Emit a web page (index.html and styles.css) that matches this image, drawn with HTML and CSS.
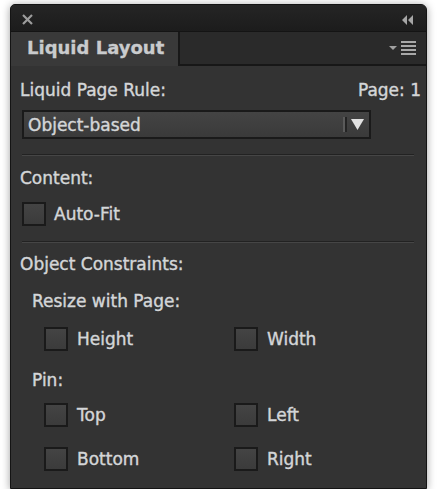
FILE: index.html
```html
<!DOCTYPE html>
<html>
<head>
<meta charset="utf-8">
<link rel="stylesheet" href="styles.css">
</head>
<body>
<div class="window">
  <div class="titlebar">
    <svg class="close" width="11" height="11" viewBox="0 0 11 11"><path d="M1 1L10 10M10 1L1 10" stroke="#9c9c9c" stroke-width="2.2" fill="none"/></svg>
    <svg class="collapse" width="11" height="10" viewBox="0 0 11 10"><path d="M0 5L5 0V10Z M6 5L11 0V10Z" fill="#a6a6a6"/></svg>
  </div>
  <div class="tabrow">
    <div class="tab">Liquid Layout</div>
    <div class="tabfill">
      <svg class="menu" width="28" height="16" viewBox="0 0 28 16">
        <path d="M0 5H8L4 9Z" fill="#a0a0a0"/>
        <rect x="12" y="0" width="15" height="2" fill="#a8a8a8"/>
        <rect x="12" y="4" width="15" height="2" fill="#a8a8a8"/>
        <rect x="12" y="8" width="15" height="2" fill="#a8a8a8"/>
        <rect x="12" y="12" width="15" height="2" fill="#a8a8a8"/>
      </svg>
    </div>
  </div>
  <div class="content">
    <div class="head">
      <span>Liquid Page Rule:</span>
      <span>Page: 1</span>
    </div>
    <div class="select">
      <span class="select-text">Object-based</span>
      <span class="select-sep"></span>
      <svg class="select-arrow" width="13" height="11" viewBox="0 0 13 11"><path d="M0 0H13L6.5 11Z" fill="#e2e2e2"/></svg>
    </div>
    <div class="rule rule-1"></div>
    <div class="label label-content">Content:</div>
    <div class="check check-autofit"><span class="box"></span><span>Auto-Fit</span></div>
    <div class="rule rule-2"></div>
    <div class="label label-constraints">Object Constraints:</div>
    <div class="label sub label-resize">Resize with Page:</div>
    <div class="grid grid-resize">
      <div class="check"><span class="box"></span><span>Height</span></div>
      <div class="check"><span class="box"></span><span>Width</span></div>
    </div>
    <div class="label sub label-pin">Pin:</div>
    <div class="grid grid-pin">
      <div class="check"><span class="box"></span><span>Top</span></div>
      <div class="check"><span class="box"></span><span>Left</span></div>
      <div class="check"><span class="box"></span><span>Bottom</span></div>
      <div class="check"><span class="box"></span><span>Right</span></div>
    </div>
  </div>
</div>
</body>
</html>
```

FILE: styles.css
```css
html, body {
  margin: 0;
  padding: 0;
  background: #ffffff;
}
body {
  font-family: "DejaVu Sans", "Lucida Grande", sans-serif;
  font-size: 17px;
  line-height: 20px;
  color: #d4d6d8;
  -webkit-text-stroke: 0.4px #d4d6d8;
}
.window {
  box-sizing: border-box;
  margin: 4px 0 0 10px;
  width: 417px;
  height: 485px;
  border: 1px solid #141414;
  border-radius: 5px 6px 0 0;
  background: #333333;
  display: flex;
  flex-direction: column;
  box-shadow: 0 1px 9px rgba(0, 0, 0, 0.38);
  overflow: hidden;
}
.titlebar {
  height: 27px;
  flex: none;
  display: flex;
  justify-content: space-between;
  align-items: flex-start;
  padding: 9px 13px 0 11px;
  box-sizing: border-box;
  background: linear-gradient(#252525, #1c1c1c);
  border-bottom: 1px solid #141414;
}
.close, .collapse {
  display: block;
}
.collapse {
  margin-top: 1px;
}
.tabrow {
  height: 34px;
  flex: none;
  display: flex;
}
.tab {
  box-sizing: border-box;
  width: 169px;
  height: 34px;
  padding: 5px 0 0 16px;
  background: #393939;
  border-right: 2px solid #181818;
  font-weight: bold;
  font-size: 18px;
  line-height: 22px;
  color: #c9cbcd;
  -webkit-text-stroke: 0.3px #c9cbcd;
}
.tabfill {
  flex: 1;
  box-sizing: border-box;
  height: 34px;
  background: #2a2a2a;
  border-bottom: 2px solid #171717;
  display: flex;
  justify-content: flex-end;
  align-items: center;
  padding-right: 9px;
}
.menu {
  display: block;
  margin-top: 1px;
}
.content {
  flex: 1;
  padding: 14px 5px 0 9px;
}
.head {
  display: flex;
  justify-content: space-between;
}
.select {
  box-sizing: border-box;
  margin: 10px 0 0 2px;
  width: 349px;
  height: 29px;
  border: 2px solid #1a1a1a;
  background: linear-gradient(#444444, #3a3a3a);
  display: flex;
  align-items: center;
  padding-left: 4px;
}
.select-text {
  flex: 1;
}
.select-sep {
  box-sizing: border-box;
  width: 4px;
  height: 15px;
  border-left: 2px solid #5a5a5a;
  border-right: 2px solid #242424;
  margin-right: 4px;
}
.select-arrow {
  display: block;
  margin-right: 5px;
}
.rule {
  margin: 0 7px 0 2px;
  border-top: 1px solid #222222;
  border-bottom: 1px solid #464646;
}
.rule-1 { margin-top: 15px; }
.rule-2 { margin-top: 15px; }
.label-content { margin-top: 12px; }
.label-constraints { margin-top: 11px; }
.label-resize { margin-top: 17px; }
.label-pin { margin-top: 19px; }
.sub { padding-left: 12px; }
.check {
  display: flex;
  align-items: center;
  height: 24px;
}
.check-autofit {
  margin: 14px 0 0 2px;
}
.box {
  box-sizing: border-box;
  width: 24px;
  height: 24px;
  border: 2px solid #1a1a1a;
  background: linear-gradient(#444444, #3b3b3b);
  margin-right: 8px;
  flex: none;
}
.grid {
  display: grid;
  grid-template-columns: 190px 1fr;
  padding-left: 24px;
}
.grid .box { margin-right: 9px; }
.grid-resize { margin-top: 16px; }
.grid-pin {
  margin-top: 13px;
  row-gap: 20px;
}
```
